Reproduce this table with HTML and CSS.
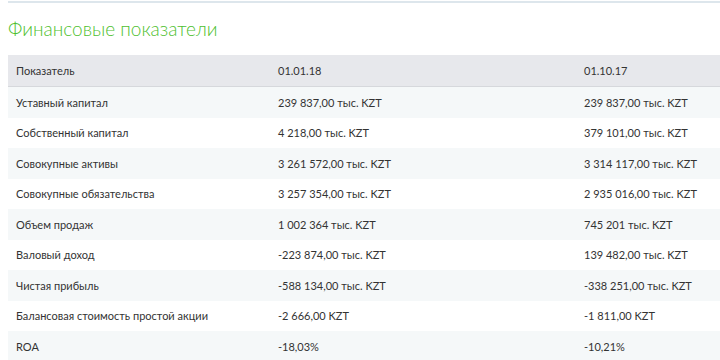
FILE: index.html
```html
<!DOCTYPE html>
<html lang="ru">
<head>
<meta charset="utf-8">
<link rel="stylesheet" href="styles.css">
</head>
<body>
<div class="page">
  <h2 class="title">Финансовые показатели</h2>
  <table class="fin">
    <thead>
      <tr><th class="c1">Показатель</th><th class="c2">01.01.18</th><th class="c3">01.10.17</th></tr>
    </thead>
    <tbody>
      <tr><td>Уставный капитал</td><td>239 837,00 тыс. KZT</td><td>239 837,00 тыс. KZT</td></tr>
      <tr><td>Собственный капитал</td><td>4 218,00 тыс. KZT</td><td>379 101,00 тыс. KZT</td></tr>
      <tr><td>Совокупные активы</td><td>3 261 572,00 тыс. KZT</td><td>3 314 117,00 тыс. KZT</td></tr>
      <tr><td>Совокупные обязательства</td><td>3 257 354,00 тыс. KZT</td><td>2 935 016,00 тыс. KZT</td></tr>
      <tr><td>Объем продаж</td><td>1 002 364 тыс. KZT</td><td>745 201 тыс. KZT</td></tr>
      <tr><td>Валовый доход</td><td>-223 874,00 тыс. KZT</td><td>139 482,00 тыс. KZT</td></tr>
      <tr><td>Чистая прибыль</td><td>-588 134,00 тыс. KZT</td><td>-338 251,00 тыс. KZT</td></tr>
      <tr><td>Балансовая стоимость простой акции</td><td>-2 666,00 KZT</td><td>-1 811,00 KZT</td></tr>
      <tr><td>ROA</td><td>-18,03%</td><td>-10,21%</td></tr>
    </tbody>
  </table>
</div>
</body>
</html>
```
FILE: styles.css
```css
html, body {
  margin: 0;
  padding: 0;
  background: #ffffff;
}
body {
  font-family: Lato, "Open Sans", sans-serif;
  color: #333333;
  overflow: hidden;
}
.page {
  margin: 1px 0 0 8px;
  border-top: 2px solid #dde6ec;
}
.title {
  margin: 0;
  padding: 13px 0 0 0;
  height: 39px;
  font-size: 19px;
  font-weight: 300;
  color: #4fbf30;
  line-height: 26px;
}
.fin {
  width: 712px;
  border-collapse: collapse;
  table-layout: fixed;
  font-size: 11px;
}
.fin th {
  text-align: left;
  font-weight: 400;
  background: #e7e8ec;
  height: 31px;
  padding: 0 8px;
  border-bottom: 1px solid #d6d8dc;
}
.fin .c1 { width: 246px; }
.fin .c2 { width: 290px; }
.fin td {
  height: 30.5px;
  padding: 0 8px;
  white-space: nowrap;
}
.fin tbody tr:nth-child(odd) td {
  background: #f5f8f9;
}
```
